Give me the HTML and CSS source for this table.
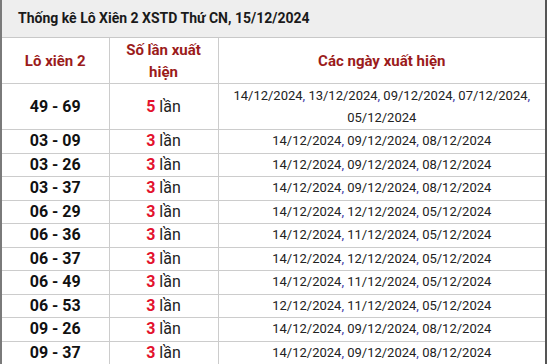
FILE: index.html
```html
<!DOCTYPE html>
<html lang="vi">
<head>
<meta charset="utf-8">
<link rel="stylesheet" href="styles.css">
</head>
<body>
<div class="frame">
  <div class="title">Thống kê Lô Xiên 2 XSTD Thứ CN, 15/12/2024</div>
  <table class="stats">
    <colgroup><col class="c1"><col class="c2"><col class="c3"></colgroup>
    <thead>
      <tr><th>Lô xiên 2</th><th>Số lần xuất hiện</th><th>Các ngày xuất hiện</th></tr>
    </thead>
    <tbody>
      <tr class="tall"><td class="pair">49 - 69</td><td class="count"><b>5</b> lần</td><td class="dates">14/12/2024<i>,</i> 13/12/2024<i>,</i> 09/12/2024<i>,</i> 07/12/2024<i>,</i> 05/12/2024</td></tr>
      <tr><td class="pair">03 - 09</td><td class="count"><b>3</b> lần</td><td class="dates">14/12/2024<i>,</i> 09/12/2024<i>,</i> 08/12/2024</td></tr>
      <tr><td class="pair">03 - 26</td><td class="count"><b>3</b> lần</td><td class="dates">14/12/2024<i>,</i> 09/12/2024<i>,</i> 08/12/2024</td></tr>
      <tr><td class="pair">03 - 37</td><td class="count"><b>3</b> lần</td><td class="dates">14/12/2024<i>,</i> 09/12/2024<i>,</i> 08/12/2024</td></tr>
      <tr><td class="pair">06 - 29</td><td class="count"><b>3</b> lần</td><td class="dates">14/12/2024<i>,</i> 12/12/2024<i>,</i> 05/12/2024</td></tr>
      <tr><td class="pair">06 - 36</td><td class="count"><b>3</b> lần</td><td class="dates">14/12/2024<i>,</i> 11/12/2024<i>,</i> 05/12/2024</td></tr>
      <tr><td class="pair">06 - 37</td><td class="count"><b>3</b> lần</td><td class="dates">14/12/2024<i>,</i> 12/12/2024<i>,</i> 05/12/2024</td></tr>
      <tr><td class="pair">06 - 49</td><td class="count"><b>3</b> lần</td><td class="dates">14/12/2024<i>,</i> 11/12/2024<i>,</i> 05/12/2024</td></tr>
      <tr><td class="pair">06 - 53</td><td class="count"><b>3</b> lần</td><td class="dates">12/12/2024<i>,</i> 11/12/2024<i>,</i> 05/12/2024</td></tr>
      <tr><td class="pair">09 - 26</td><td class="count"><b>3</b> lần</td><td class="dates">14/12/2024<i>,</i> 09/12/2024<i>,</i> 08/12/2024</td></tr>
      <tr><td class="pair">09 - 37</td><td class="count"><b>3</b> lần</td><td class="dates">14/12/2024<i>,</i> 09/12/2024<i>,</i> 08/12/2024</td></tr>
    </tbody>
  </table>
</div>
</body>
</html>
```
FILE: styles.css
```css
html, body {
  margin: 0;
  padding: 0;
  background: #ffffff;
}
body {
  font-family: Roboto, "Liberation Sans", Arial, sans-serif;
  color: #222222;
}
.frame {
  width: 547px;
  height: 364px;
  box-sizing: border-box;
  border-left: 2px solid #7a7a7a;
  border-right: 2px solid #555555;
  overflow: hidden;
}
.title {
  height: 37px;
  line-height: 37px;
  background: #eeeeee;
  border-bottom: 1px solid #c8c8c8;
  padding-left: 16px;
  font-size: 14px;
  font-weight: bold;
  color: #1a1a1a;
}
.stats {
  width: 543px;
  border-collapse: collapse;
  table-layout: fixed;
}
.c1 { width: 107px; }
.c2 { width: 109px; }
.stats th, .stats td {
  border: 1px solid #cccccc;
  text-align: center;
  padding: 0;
}
.stats tr > :first-child { border-left: none; }
.stats tr > :last-child { border-right: none; }
.stats thead tr > * { border-top: none; }
.stats th {
  height: 45px;
  font-size: 15px;
  font-weight: bold;
  color: #9b1b1b;
  line-height: 22px;
  padding: 0 14px;
}
.stats th:last-child { padding: 0; }
.stats td { height: 22.5px; line-height: 20px; }
.stats tr.tall td { height: 45px; }
.pair {
  font-size: 16px;
  font-weight: bold;
  color: #111111;
}
.count {
  font-size: 16px;
  color: #222222;
}
.count b {
  color: #e3122d;
  font-weight: bold;
}
.dates {
  font-size: 13px;
  color: #222222;
}
.tall .dates { padding: 0 14px; line-height: 22px; }
.dates i {
  font-style: normal;
  color: #3c3ca8;
}
```
